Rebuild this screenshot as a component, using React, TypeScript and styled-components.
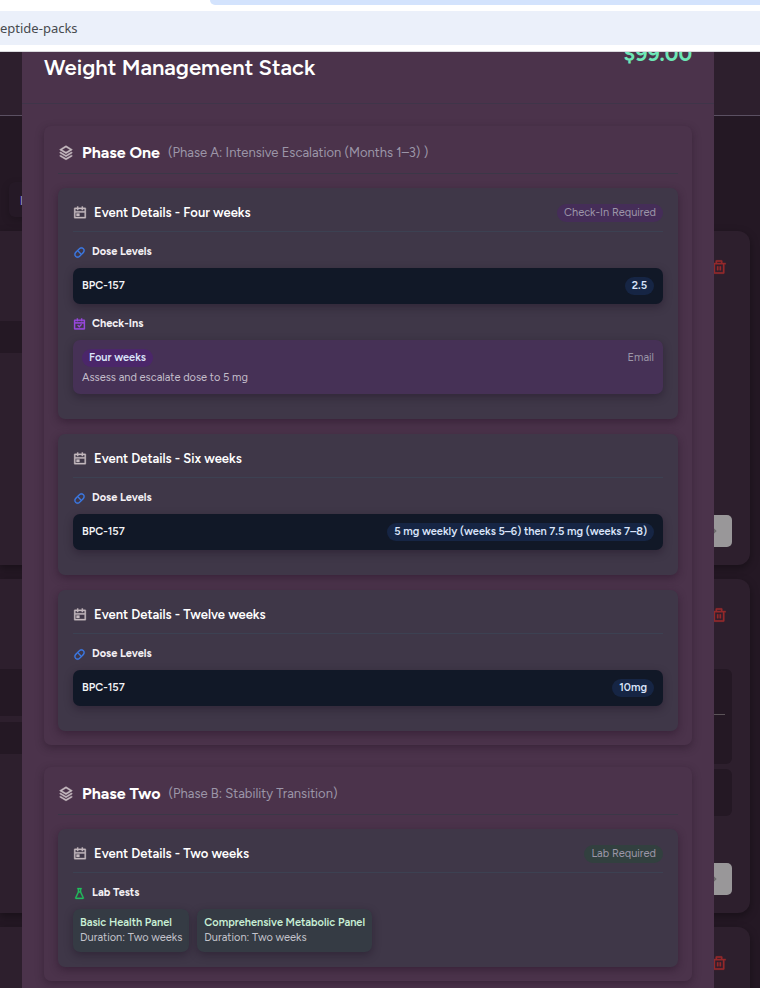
import React from "react";
import styled, { createGlobalStyle } from "styled-components";
import {
  RiStackLine,
  RiCalendarEventLine,
  RiCapsuleLine,
  RiCalendarCheckLine,
  RiFlaskLine,
  RiDeleteBinLine,
  RiArrowRightLine,
} from "react-icons/ri";

const GlobalStyle = createGlobalStyle`
  *, *::before, *::after { box-sizing: border-box; }
  body {
    margin: 0;
    font-family: Figtree, Lato, sans-serif;
    font-size: 11px;
    line-height: 16px;
    color: #ffffff;
    background: #241824;
  }
  h1, h2, h3, h4, p { margin: 0; }
  button { font: inherit; border: 0; cursor: pointer; }
`;

const Screen = styled.div`
  display: flex;
  flex-direction: column;
  height: 100vh;
  overflow: hidden;
`;

/* Browser chrome */
const Chrome = styled.header`
  flex: none;
  background: #ffffff;
  border-bottom: 1px solid #d9d9dd;
`;

const TabStrip = styled.div`
  height: 5px;
  margin-left: 210px;
  border-bottom-left-radius: 10px;
  background: #d3e3fd;
`;

const AddressBar = styled.div`
  display: flex;
  align-items: center;
  height: 34px;
  margin: 6px 0;
  background: #ebf0fa;
  color: #474a4e;
  font-family: "Noto Sans", sans-serif;
  font-size: 13px;
  line-height: 20px;
`;

/* Both layers share one grid cell so that the dialog covers the page. */
const Stage = styled.main`
  flex: 1;
  min-height: 0;
  display: grid;
  grid-template: minmax(0, 1fr) / minmax(0, 1fr);
  overflow: hidden;
`;

const Backdrop = styled.div`
  grid-area: 1 / 1;
  overflow: hidden;
`;

const TopBar = styled.div`
  height: 64px;
  background: #2d1f2d;
  border-bottom: 1px solid #5b5062;
`;

const Toolbar = styled.div`
  display: flex;
  height: 115px;
  padding: 66px 0 0 9px;
`;

const FilterBox = styled.div`
  width: 120px;
  height: 35px;
  padding: 14px 11px;
  border-radius: 6px;
  background: #251926;
  box-shadow: 0 3px 8px rgba(0, 0, 0, 0.2);
`;

const FilterMark = styled.div`
  width: 4px;
  height: 9px;
  border-left: 1px solid #2b1f8c;
  background: #7d8090;
`;

const PackList = styled.div`
  display: grid;
  gap: 14px;
  padding-right: 10px;
`;

const Pack = styled.div`
  display: grid;
  grid-template-columns: 1fr 1fr;
  height: 334px;
  border-radius: 0 12px 12px 0;
  background: #2d1f2d;
  box-shadow: 0 3px 8px rgba(0, 0, 0, 0.35);
`;

const Shade = styled.div<{ $h: number }>`
  width: 100%;
  height: ${(p) => p.$h}px;
  border-radius: 6px;
  background: #241824;
`;

const PackLeft = styled.div`
  display: grid;
  align-content: start;
  gap: 6px;
  padding-top: 90px;
  ${Shade} {
    border-radius: 0 6px 6px 0;
  }
`;

const PackRight = styled.div`
  display: flex;
  flex-direction: column;
  align-items: flex-end;
  padding: 28px 18px 18px 0;
`;

const ShadeGroup = styled.div`
  width: 100%;
  display: grid;
  gap: 5px;
  margin-top: 46px;
`;

const LinedShade = styled(Shade)`
  padding: 45px 7px 0 0;
  &::after {
    content: "";
    display: block;
    border-top: 1px solid #5b5358;
  }
`;

const DeleteButton = styled.button`
  display: flex;
  margin-right: 5px;
  padding: 0;
  background: none;
  color: #942a2c;
  font-size: 16px;
  svg {
    stroke-width: 0.6;
  }
`;

const OpenButton = styled.button`
  display: flex;
  align-items: center;
  justify-content: flex-end;
  width: 120px;
  height: 32px;
  margin-top: auto;
  padding: 0 13px;
  border-radius: 5px;
  background: #999799;
  color: #6c6a6c;
  font-size: 14px;
`;

/* Dialog */
const DialogLayer = styled.div`
  grid-area: 1 / 1;
  position: relative;
  min-height: 0;
  padding: 0 46px 0 22px;
`;

const Dialog = styled.section`
  height: 100%;
  overflow: hidden;
  background: #4b334b;
`;

/* Scrolled slightly past the top, so the price is partly out of view. */
const DialogHead = styled.div`
  display: flex;
  justify-content: space-between;
  align-items: flex-end;
  min-height: 64px;
  margin-top: -12px;
  padding: 0 22px 20px;
  border-bottom: 1px solid #3f3549;
`;

const Title = styled.h1`
  font-size: 22px;
  line-height: 30px;
  font-weight: 600;
`;

const Price = styled.strong`
  align-self: flex-start;
  color: #6ee7b7;
  font-size: 21px;
  line-height: 28px;
  font-weight: 700;
`;

const DialogBody = styled.div`
  display: grid;
  gap: 22px;
  padding: 22px;
`;

const PhaseCard = styled.section`
  padding: 14px;
  border-radius: 7px;
  background: #4b334b;
  box-shadow: 0 3px 8px rgba(30, 12, 30, 0.38);
`;

const PhaseHead = styled.div`
  display: flex;
  align-items: center;
  gap: 8px;
  height: 34px;
  padding-bottom: 8px;
  border-bottom: 1px solid #3b3747;
`;

const PhaseIcon = styled(RiStackLine)`
  flex: none;
  width: 16px;
  height: 16px;
  color: #c6bac0;
  stroke-width: 0.6;
`;

const PhaseTitle = styled.h2`
  font-size: 16px;
  line-height: 24px;
  font-weight: 700;
`;

const PhaseNote = styled.span`
  font-size: 13px;
  line-height: 20px;
  color: #9c96a8;
`;

const Events = styled.div`
  display: grid;
  gap: 15px;
  margin-top: 14px;
`;

const EventCard = styled.article`
  padding: 14px 15px 15px;
  border-radius: 7px;
  background: #3f3748;
  box-shadow: 0 3px 8px rgba(30, 12, 30, 0.42);
`;

const EventHead = styled.div`
  display: flex;
  align-items: center;
  gap: 7px;
  height: 30px;
  padding-bottom: 8px;
  border-bottom: 1px solid #3c4152;
`;

const EventTitle = styled.h3`
  flex: 1;
  font-size: 13px;
  line-height: 20px;
  font-weight: 600;
`;

const EventIcon = styled(RiCalendarEventLine)`
  flex: none;
  width: 14px;
  height: 14px;
  color: #c6bac0;
  stroke-width: 0.6;
`;

const tones = {
  violet: "#452d58",
  violetStrong: "#4b266a",
  green: "#32403f",
  blue: "#162544",
};

const Pill = styled.span<{ $tone: keyof typeof tones; $strong?: boolean }>`
  padding: 1px 7px;
  border-radius: 9px;
  background: ${(p) => tones[p.$tone]};
  color: ${(p) => (p.$strong ? "#dbe5fb" : "#9c96a8")};
  font-weight: ${(p) => (p.$strong ? 600 : 400)};
`;

const Group = styled.div<{ $trail?: boolean }>`
  display: grid;
  gap: 8px;
  margin-top: 12px;
  padding-bottom: ${(p) => (p.$trail ? 10 : 0)}px;
  & + & {
    margin-top: 2px;
  }
`;

const GroupTitle = styled.h4<{ $color: string }>`
  display: flex;
  align-items: center;
  gap: 6px;
  font-size: 11px;
  line-height: 16px;
  font-weight: 700;
  color: #f3f0f4;
  svg {
    width: 13px;
    height: 13px;
    color: ${(p) => p.$color};
    stroke-width: 0.6;
  }
`;

const DoseRow = styled.div`
  display: flex;
  align-items: center;
  justify-content: space-between;
  height: 36px;
  padding: 0 9px;
  border-radius: 7px;
  background: #111827;
  font-weight: 600;
  color: #f3f4f6;
  box-shadow: 0 3px 8px rgba(20, 10, 25, 0.35);
`;

const CheckIn = styled.div`
  padding: 9px 9px 8px;
  border-radius: 7px;
  background: #463156;
  color: #c4becb;
  box-shadow: 0 3px 8px rgba(20, 10, 25, 0.35);
`;

const CheckInTop = styled.div`
  display: flex;
  align-items: center;
  justify-content: space-between;
  margin-bottom: 3px;
`;

const Muted = styled.span`
  color: #9c96a8;
`;

const Labs = styled.div`
  display: flex;
  flex-wrap: wrap;
  gap: 8px;
`;

const Lab = styled.div`
  padding: 6px 7px 7px;
  border-radius: 7px;
  background: #353b44;
  line-height: 15px;
  color: #c4c4cc;
  box-shadow: 0 3px 8px rgba(20, 10, 25, 0.35);
  strong {
    display: block;
    font-weight: 600;
    color: #c9f0d6;
  }
`;

interface EventData {
  when: string;
  badge?: { text: string; tone: "violet" | "green" };
  dose?: string;
  checkIn?: { when: string; via: string; note: string };
  labs?: { name: string; duration: string }[];
}

interface PhaseData {
  name: string;
  note: string;
  events: EventData[];
}

const phases: PhaseData[] = [
  {
    name: "Phase One",
    note: "(Phase A: Intensive Escalation (Months 1–3) )",
    events: [
      {
        when: "Four weeks",
        badge: { text: "Check-In Required", tone: "violet" },
        dose: "2.5",
        checkIn: { when: "Four weeks", via: "Email", note: "Assess and escalate dose to 5 mg" },
      },
      { when: "Six weeks", dose: "5 mg weekly (weeks 5–6) then 7.5 mg (weeks 7–8)" },
      { when: "Twelve weeks", dose: "10mg" },
    ],
  },
  {
    name: "Phase Two",
    note: "(Phase B: Stability Transition)",
    events: [
      {
        when: "Two weeks",
        badge: { text: "Lab Required", tone: "green" },
        labs: [
          { name: "Basic Health Panel", duration: "Two weeks" },
          { name: "Comprehensive Metabolic Panel", duration: "Two weeks" },
        ],
      },
    ],
  },
];

function EventDetails({ event }: { event: EventData }) {
  return (
    <EventCard>
      <EventHead>
        <EventIcon />
        <EventTitle>Event Details - {event.when}</EventTitle>
        {event.badge && <Pill $tone={event.badge.tone}>{event.badge.text}</Pill>}
      </EventHead>
      {event.dose && (
        <Group $trail>
          <GroupTitle $color="#3b7bea"><RiCapsuleLine />Dose Levels</GroupTitle>
          <DoseRow>
            <span>BPC-157</span>
            <Pill $tone="blue" $strong>{event.dose}</Pill>
          </DoseRow>
        </Group>
      )}
      {event.checkIn && (
        <Group $trail>
          <GroupTitle $color="#a04be8"><RiCalendarCheckLine />Check-Ins</GroupTitle>
          <CheckIn>
            <CheckInTop>
              <Pill $tone="violetStrong" $strong>{event.checkIn.when}</Pill>
              <Muted>{event.checkIn.via}</Muted>
            </CheckInTop>
            <p>{event.checkIn.note}</p>
          </CheckIn>
        </Group>
      )}
      {event.labs && (
        <Group>
          <GroupTitle $color="#22c05e"><RiFlaskLine />Lab Tests</GroupTitle>
          <Labs>
            {event.labs.map((lab) => (
              <Lab key={lab.name}>
                <strong>{lab.name}</strong>
                Duration: {lab.duration}
              </Lab>
            ))}
          </Labs>
        </Group>
      )}
    </EventCard>
  );
}

function BackgroundPack({ detailed }: { detailed?: boolean }) {
  return (
    <Pack>
      <PackLeft>
        <Shade $h={detailed ? 47 : 32} />
        {detailed && <Shade $h={32} />}
      </PackLeft>
      <PackRight>
        <DeleteButton aria-label="Delete pack"><RiDeleteBinLine /></DeleteButton>
        {detailed && (
          <ShadeGroup>
            <LinedShade $h={95} />
            <Shade $h={47} />
          </ShadeGroup>
        )}
        <OpenButton aria-label="Open pack"><RiArrowRightLine /></OpenButton>
      </PackRight>
    </Pack>
  );
}

export default function App() {
  return (
    <Screen>
      <GlobalStyle />
      <Chrome>
        <TabStrip />
        <AddressBar>eptide-packs</AddressBar>
      </Chrome>
      <Stage>
        <Backdrop>
          <TopBar />
          <Toolbar>
            <FilterBox><FilterMark /></FilterBox>
          </Toolbar>
          <PackList>
            <BackgroundPack />
            <BackgroundPack detailed />
            <BackgroundPack />
          </PackList>
        </Backdrop>
        <DialogLayer>
          <Dialog role="dialog" aria-labelledby="stack-title">
            <DialogHead>
              <Title id="stack-title">Weight Management Stack</Title>
              <Price>$99.00</Price>
            </DialogHead>
            <DialogBody>
              {phases.map((phase) => (
                <PhaseCard key={phase.name}>
                  <PhaseHead>
                    <PhaseIcon />
                    <PhaseTitle>{phase.name}</PhaseTitle>
                    <PhaseNote>{phase.note}</PhaseNote>
                  </PhaseHead>
                  <Events>
                    {phase.events.map((event) => (
                      <EventDetails key={event.when} event={event} />
                    ))}
                  </Events>
                </PhaseCard>
              ))}
            </DialogBody>
          </Dialog>
        </DialogLayer>
      </Stage>
    </Screen>
  );
}
